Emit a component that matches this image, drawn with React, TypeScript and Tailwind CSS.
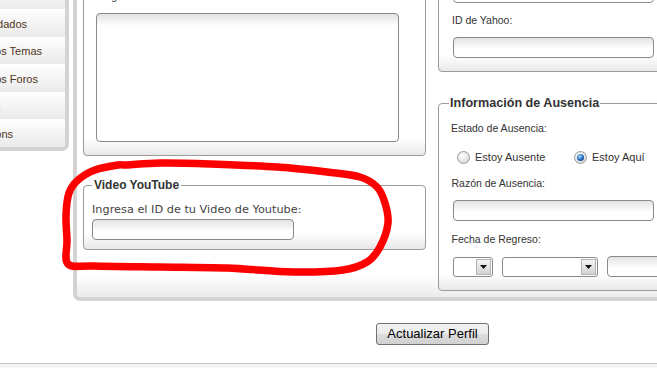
import React from "react";

const menu = [
  { label: "Panel de Control", pr: "pr-[80px]" },
  { label: "Editar Perfil", pr: "pr-[80px]" },
  { label: "Mensajes Privados", pr: "pr-[80px]" },
  { label: "Lista de Amigos", pr: "pr-[80px]" },
  { label: "Mensajes Guardados", pr: "pr-[38px]" },
  { label: "Mis Últimos Temas", pr: "pr-[23px]" },
  { label: "Mis Últimos Foros", pr: "pr-[27px]" },
  { label: "Firma", pr: "pr-[80px]" },
  { label: "Emoticons", pr: "pr-[52px]" },
];

// outline of the hand drawn red mark
const marker: [number, number][] = [
  [127, 165], [160, 163], [210, 164], [277, 167], [327, 172], [360, 177],
  [377, 187], [385, 203], [388, 223], [380, 247], [367, 262], [343, 270],
  [293, 272], [227, 268], [160, 267], [93, 266], [68, 264], [67, 240],
  [66, 215], [69, 193], [78, 180], [95, 170], [118, 165],
];

function smoothPath(pts: [number, number][]) {
  const n = pts.length;
  let d = `M${pts[0][0]} ${pts[0][1]}`;
  for (let i = 0; i < n; i++) {
    const p0 = pts[(i - 1 + n) % n];
    const p1 = pts[i];
    const p2 = pts[(i + 1) % n];
    const p3 = pts[(i + 2) % n];
    const c1x = p1[0] + (p2[0] - p0[0]) / 6;
    const c1y = p1[1] + (p2[1] - p0[1]) / 6;
    const c2x = p2[0] - (p3[0] - p1[0]) / 6;
    const c2y = p2[1] - (p3[1] - p1[1]) / 6;
    d += ` C${c1x.toFixed(1)} ${c1y.toFixed(1)} ${c2x.toFixed(1)} ${c2y.toFixed(1)} ${p2[0]} ${p2[1]}`;
  }
  return d;
}

const inputCls =
  "block h-[21px] border border-[#8a8a8a] rounded-[4px] bg-[linear-gradient(to_bottom,#e2e2e2,#ffffff_11px)] outline-none";
const fieldsetCls =
  "border border-[#9b9b9b] rounded-[4px] bg-[linear-gradient(to_bottom,#ffffff_calc(100%-16px),#e8e8e8)]";
const labelCls = "block text-[10.5px] leading-[14px] text-[#333]";

function Arrow() {
  return (
    <span className="flex items-center justify-center w-[15px] h-[16px] border border-[#b3b3b3] bg-[linear-gradient(to_bottom,#f4f4f4,#d4d4d4)]">
      <svg width="7" height="4" viewBox="0 0 7 4">
        <path d="M0 0h7L3.5 4z" fill="#111" />
      </svg>
    </span>
  );
}

function Radio({ checked }: { checked?: boolean }) {
  return (
    <span className="flex items-center justify-center w-[13px] h-[13px] rounded-full border border-[#9a9a9a] bg-[radial-gradient(circle_at_40%_35%,#ffffff,#cfcfcf)]">
      {checked && (
        <span className="w-[7px] h-[7px] rounded-full bg-[radial-gradient(circle_at_40%_35%,#a8dcff,#1d64c0_55%,#0b2a5c)]" />
      )}
    </span>
  );
}

export default function App() {
  return (
    <div className="relative w-[657px] h-[368px] overflow-hidden bg-white font-['Liberation_Sans',Arial,sans-serif]">
      <div className="-mt-[101px] flex items-start">
        {/* side menu */}
        <nav className="shrink-0 w-[69px] border-r-4 border-b-4 border-[#d3d3d3] rounded-br-[7px] overflow-hidden">
          {menu.map((item) => (
            <div
              key={item.label}
              className={`flex items-center justify-end h-[27.5px] overflow-hidden border-t-2 border-white bg-[linear-gradient(to_bottom,#fdfdfd,#eaeaea)] ${item.pr}`}
            >
              <span className="whitespace-nowrap text-[11px] text-[#4e3319]">{item.label}</span>
            </div>
          ))}
        </nav>

        {/* profile panel */}
        <div className="shrink-0 ml-[4px] w-[640px] border-l-4 border-b-4 border-[#d3d3d3] rounded-bl-[7px] pl-[6px] pb-[6.5px] bg-[linear-gradient(to_bottom,#ffffff_calc(100%-22px),#ebebeb)]">
          <div className="flex items-start gap-[12px]">
            <div className="w-[343px] shrink-0 mt-[65px] flex flex-col">
              <fieldset className={`${fieldsetCls} pl-[12px] pt-[10px] pb-[13px]`}>
                <legend className="px-[2px] text-[12.5px] leading-[15px] font-bold text-[#333]">
                  Información Personal
                </legend>
                <label className={labelCls}>Biografía:</label>
                <textarea className="mt-[10.3px] block w-[303px] h-[128.4px] resize-none border border-[#8a8a8a] rounded-[4px] bg-[linear-gradient(to_bottom,#e2e2e2,#ffffff_12px)] outline-none" />
              </fieldset>

              <fieldset className={`${fieldsetCls} mt-[22.3px] pl-[8px] pt-[10.5px] pb-[9px]`}>
                <legend className="px-[2px] text-[12px] leading-[15px] font-bold text-[#333]">
                  Video YouTube
                </legend>
                <label className="block font-['DejaVu_Sans',Verdana,sans-serif] text-[11.3px] leading-[14px] text-[#444]">
                  Ingresa el ID de tu Video de Youtube:
                </label>
                <input className={`${inputCls} mt-[1.3px] w-[202px]`} />
              </fieldset>
            </div>

            <div className="w-[250px] shrink-0 mt-[33.4px] flex flex-col">
              <fieldset className={`${fieldsetCls} pl-[12px] pt-[10px] pb-[13px]`}>
                <legend className="-ml-[2px] px-[1px] text-[12.6px] leading-[15px] font-bold text-[#333]">
                  Mensajería
                </legend>
                <label className={labelCls}>ID de MSN:</label>
                <input className={`${inputCls} mt-[10.3px] ml-[1.5px] w-[201px]`} />
                <label className={`${labelCls} mt-[10.3px] ml-[1px]`}>ID de Yahoo:</label>
                <input className={`${inputCls} mt-[10.3px] ml-[1.5px] w-[201px]`} />
              </fieldset>

              <fieldset className={`${fieldsetCls} mt-[23.6px] pl-[12px] pt-[10.5px] pb-[12.8px]`}>
                <legend className="-ml-[2px] px-[1px] text-[12.6px] leading-[15px] font-bold text-[#333]">
                  Información de Ausencia
                </legend>
                <label className={labelCls}>Estado de Ausencia:</label>
                <div className="mt-[14px] h-[16px] flex items-center text-[11px] text-[#333]">
                  <span className="ml-[5.5px]">
                    <Radio />
                  </span>
                  <span className="ml-[5.5px]">Estoy Ausente</span>
                  <span className="ml-[28.5px]">
                    <Radio checked />
                  </span>
                  <span className="ml-[5.2px]">Estoy Aquí</span>
                </div>
                <label className={`${labelCls} mt-[11px] ml-[0.5px]`}>Razón de Ausencia:</label>
                <input className={`${inputCls} mt-[9.7px] ml-[1.5px] w-[201px] h-[21.7px]`} />
                <label className={`${labelCls} mt-[10.6px] ml-[0.5px]`}>Fecha de Regreso:</label>
                <div className="mt-[10.4px] ml-[1.5px] flex items-center gap-[9px]">
                  <div className="flex items-center justify-end w-[40px] h-[20px] pr-[1px] border border-[#8a8a8a] rounded-[3px] bg-white">
                    <Arrow />
                  </div>
                  <div className="flex items-center justify-end w-[96px] h-[20px] pr-[1px] border border-[#8a8a8a] rounded-[3px] bg-white">
                    <Arrow />
                  </div>
                  <input className={`${inputCls} h-[20px] w-[70px]`} />
                </div>
              </fieldset>
            </div>
          </div>
        </div>
      </div>

      <div className="mt-[20px] pl-[376px]">
        <button className="w-[113px] h-[22px] border border-[#707070] rounded-[3px] bg-[linear-gradient(to_bottom,#f2f2f2_0%,#ebebeb_50%,#dddddd_50%,#d0d0d0_100%)] text-[13px] leading-[20px] text-black">
          Actualizar Perfil
        </button>
      </div>

      <div className="mt-[18px] h-[20px] border-t border-[#c4c4c4] bg-[#f3f3f3]" />

      <svg
        className="pointer-events-none absolute inset-0"
        width="657"
        height="368"
        viewBox="0 0 657 368"
      >
        <path
          d={smoothPath(marker)}
          fill="none"
          stroke="#ff0000"
          strokeWidth="7.5"
          strokeLinecap="round"
          strokeLinejoin="round"
        />
      </svg>
    </div>
  );
}
